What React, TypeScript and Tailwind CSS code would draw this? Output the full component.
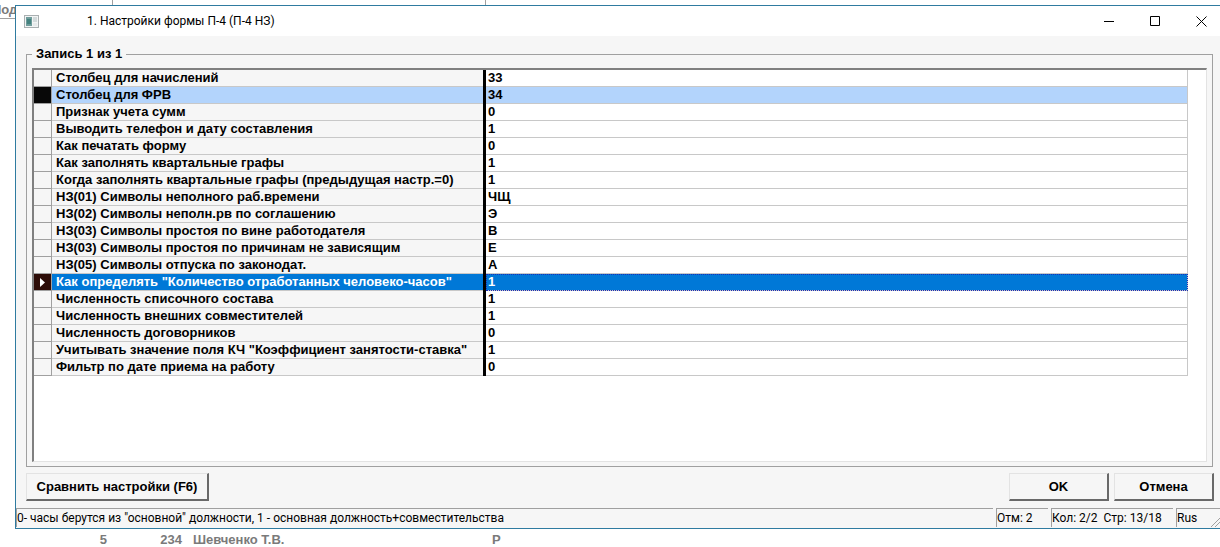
import clsx from 'clsx';

type Setting = {
  label: string;
  value: string;
  state?: 'marked' | 'current';
};

const SETTINGS: Setting[] = [
  { label: 'Столбец для начислений', value: '33' },
  { label: 'Столбец для ФРВ', value: '34', state: 'marked' },
  { label: 'Признак учета сумм', value: '0' },
  { label: 'Выводить телефон и дату составления', value: '1' },
  { label: 'Как печатать форму', value: '0' },
  { label: 'Как заполнять квартальные графы', value: '1' },
  { label: 'Когда заполнять квартальные графы (предыдущая настр.=0)', value: '1' },
  { label: 'НЗ(01) Символы неполного раб.времени', value: 'ЧЩ' },
  { label: 'НЗ(02) Символы неполн.рв по соглашению', value: 'Э' },
  { label: 'НЗ(03) Символы простоя по вине работодателя', value: 'В' },
  { label: 'НЗ(03) Символы простоя по причинам не зависящим', value: 'Е' },
  { label: 'НЗ(05) Символы отпуска по законодат.', value: 'А' },
  { label: 'Как определять "Количество отработанных человеко-часов"', value: '1', state: 'current' },
  { label: 'Численность списочного состава', value: '1' },
  { label: 'Численность внешних совместителей', value: '1' },
  { label: 'Численность договорников', value: '0' },
  { label: 'Учитывать значение поля КЧ "Коэффициент занятости-ставка"', value: '1' },
  { label: 'Фильтр по дате приема на работу', value: '0' },
];

function AppIcon() {
  return (
    <svg width="15" height="13" viewBox="0 0 15 13" aria-hidden="true">
      <rect x="0.5" y="0.5" width="14" height="12" fill="#f2f4f4" stroke="#a9afb1" />
      <rect x="2" y="2" width="6" height="9" fill="#6f9c9b" />
      <rect x="3" y="4" width="4" height="5" fill="#44827f" />
      <rect x="9" y="2" width="4" height="5" fill="#d3dadb" />
      <rect x="9" y="8" width="4" height="3" fill="#e6eaeb" />
    </svg>
  );
}

function TitleBar() {
  return (
    <header className="flex h-[30px] items-center bg-white pr-[13px] pl-2">
      <AppIcon />
      <h1 className="ml-12 flex-1 font-[Roboto,sans-serif] text-[12px] font-normal">1. Настройки формы П-4 (П-4 НЗ)</h1>
      <div className="flex gap-[35px]">
        <button type="button" aria-label="Свернуть">
          <svg width="11" height="11" viewBox="0 0 11 11" stroke="#000"><path d="M0 5.5h10" /></svg>
        </button>
        <button type="button" aria-label="Развернуть">
          <svg width="11" height="11" viewBox="0 0 11 11" fill="none" stroke="#000"><path d="M.5.5h9v9h-9z" /></svg>
        </button>
        <button type="button" aria-label="Закрыть">
          <svg width="11" height="11" viewBox="0 0 11 11" stroke="#000"><path d="M.5.5l10 10M10.5.5l-10 10" /></svg>
        </button>
      </div>
    </header>
  );
}

function SettingRow({ label, value, state }: Setting) {
  return (
    <tr className="h-[17px]">
      <td
        className={clsx(
          'border-r border-b border-[#a0a0a0] p-0',
          state === 'marked' && 'bg-[#080808]',
          state === 'current' && 'bg-[#2e0d08]',
          !state && 'bg-[#f6f6f6]',
        )}
      >
        {state === 'current' && (
          <svg className="ml-[6px] block" width="5" height="9" viewBox="0 0 5 9" aria-hidden="true">
            <path d="M0 0l5 4.5L0 9z" fill="#fff" />
          </svg>
        )}
      </td>
      <th
        scope="row"
        className={clsx(
          'border-r-3 border-black p-0 text-left font-bold whitespace-nowrap',
          state === 'marked' && 'bg-[#b3d4fc]',
          state === 'current' && 'bg-[#0078d7] text-white',
          !state && 'bg-[#f6f6f6]',
        )}
      >
        <div className="h-[17px] border-b border-[#c8c8c8] pl-1">{label}</div>
      </th>
      <td
        className={clsx(
          'border-r border-[#c8c8c8] p-0',
          state === 'marked' && 'bg-[#b3d4fc]',
          state === 'current' && 'bg-[#0078d7] text-white outline outline-dotted -outline-offset-1 outline-[#1b2fb8]',
        )}
      >
        <div className="h-[17px] border-b border-[#c8c8c8] pl-[2px]">{value}</div>
      </td>
    </tr>
  );
}

function DialogButton({ children, className }: { children: string; className: string }) {
  return (
    <button
      type="button"
      className={clsx(
        'h-7 border-t border-r-2 border-b-2 border-l border-t-[#e3e3e3] border-r-[#696969] border-b-[#696969] border-l-[#e3e3e3] bg-[#f6f6f6] font-bold',
        className,
      )}
    >
      {children}
    </button>
  );
}

function StatusBar() {
  const panel = 'h-[19px] border-t border-l border-[#a0a0a0] whitespace-pre';
  return (
    <footer className="flex h-5 gap-[3px] font-[Roboto,sans-serif] text-[12px] leading-[18px] font-normal">
      <div className={clsx(panel, 'min-w-0 flex-1')}>
        0- часы берутся из "основной" должности, 1 - основная должность+совместительства
      </div>
      <div className={clsx(panel, 'w-[52px]')}>Отм: 2</div>
      <div className={clsx(panel, 'w-[122px]')}>Кол: 2/2  Стр: 13/18</div>
      <div className={clsx(panel, 'flex w-11 justify-between')}>
        Rus
        <svg className="self-end" width="9" height="9" viewBox="0 0 9 9" stroke="#a0a0a0" aria-hidden="true">
          <path d="M0 9l9-9M4 9l5-5" />
        </svg>
      </div>
    </footer>
  );
}

// Journal window that stays partly visible behind the dialog
function Backdrop() {
  return (
    <div className="flex min-h-screen flex-col justify-between text-[#7a7a7a]">
      <div className="flex h-[19px] items-end border-b border-[#a0a0a0]">
        <span className="-ml-2 w-[120px]">Под</span>
        <span className="h-full w-[374px] border-x border-[#a0a0a0]" />
      </div>
      <div className="flex leading-[15px]">
        <span className="w-[107px] text-right">5</span>
        <span className="w-[75px] text-right">234</span>
        <span className="w-[310px] pl-[11px]">Шевченко Т.В.</span>
        <span>Р</span>
      </div>
    </div>
  );
}

export default function App() {
  return (
    <div className="relative overflow-hidden bg-white font-['Liberation_Sans',Arial,sans-serif] text-[13px] leading-4 font-bold text-black">
      <Backdrop />
      <div role="dialog" className="absolute top-[5px] right-0 left-[15px] border-t border-b border-l border-[#2f7ba0] bg-[#f6f6f6]">
        <TitleBar />
        <main className="pt-[10px] pr-[6px] pl-[10px]">
          <fieldset className="mr-px border border-[#a0a0a0] px-[5px] pb-1">
            <legend className="px-1">Запись 1 из 1</legend>
            <div className="mt-[6px] min-h-[394px] border-t-2 border-r border-b border-l-2 border-t-[#808080] border-r-[#e3e3e3] border-b-[#e3e3e3] border-l-[#808080] bg-white pr-[18px]">
              <table className="w-full table-fixed border-separate border-spacing-0">
                <colgroup>
                  <col className="w-[18px]" />
                  <col className="w-[434px]" />
                  <col />
                </colgroup>
                <tbody>
                  {SETTINGS.map((setting) => (
                    <SettingRow key={setting.label} {...setting} />
                  ))}
                </tbody>
              </table>
            </div>
          </fieldset>
          <div className="flex gap-[5px] pt-[6px] pb-[7px]">
            <DialogButton className="w-[183px]">Сравнить настройки (F6)</DialogButton>
            <DialogButton className="ml-auto w-[100px]">OK</DialogButton>
            <DialogButton className="w-[100px]">Отмена</DialogButton>
          </div>
        </main>
        <StatusBar />
      </div>
    </div>
  );
}
